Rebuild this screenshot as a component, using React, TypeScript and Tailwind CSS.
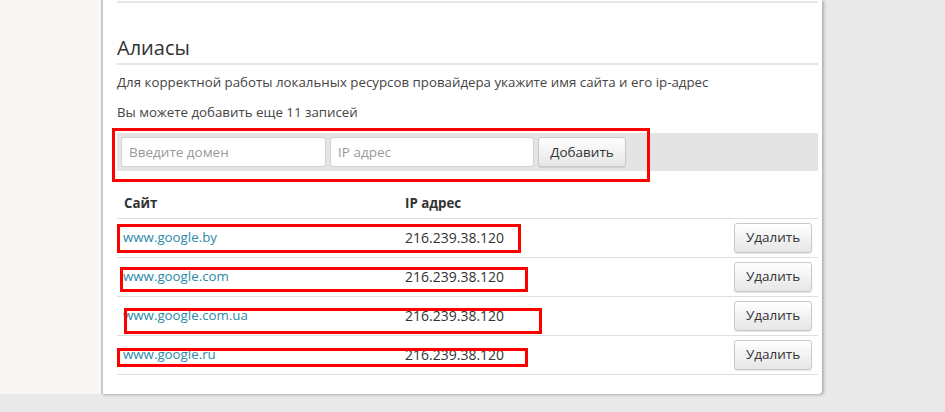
import React from "react";

const rows = [
  { site: "www.google.by", ip: "216.239.38.120", mark: "left-[0px] top-[5px] w-[404px] h-[29px]" },
  { site: "www.google.com", ip: "216.239.38.120", mark: "left-[3px] top-[9px] w-[408px] h-[25px]" },
  { site: "www.google.com.ua", ip: "216.239.38.120", mark: "left-[7px] top-[11px] w-[418px] h-[26px]" },
  { site: "www.google.ru", ip: "216.239.38.120", mark: "left-[0px] top-[12px] w-[411px] h-[19px]" },
];

export default function App() {
  return (
    <div
      className="w-[945px] h-[412px] overflow-hidden bg-[#e9e9e9] text-[13.3px] text-[#333]"
      style={{ fontFamily: '"Open Sans", "Noto Sans", sans-serif' }}
    >
      <div className="flex h-[394px]">
        <div className="w-[101px] bg-[#fbf6f6]" />
        <div className="w-[721px] bg-white border-l-2 border-[#cbcbcb] rounded-br-[4px] shadow-[2px_1px_3px_rgba(0,0,0,0.25)] pl-[14px] pr-[4px]">
          <div className="mt-[1px] border-t-2 border-[#e6e6e6]" />
          <h2 className="mt-[33px] text-[20px] leading-[24px] font-normal text-[#333] pb-[3px] border-b-2 border-[#e6e6e6]">
            Алиасы
          </h2>
          <p className="mt-[8px] leading-[18px] text-[#444]">
            Для корректной работы локальных ресурсов провайдера укажите имя сайта и его ip-адрес
          </p>
          <p className="mt-[12px] leading-[18px] text-[#444]">Вы можете добавить еще 11 записей</p>
          <div className="relative mt-[12px]">
            <div className="flex items-center gap-[4px] bg-[#e4e4e4] h-[38px] px-[4px]">
              <input
                placeholder="Введите домен"
                className="w-[205px] h-[30px] rounded-[3px] border border-[#d4d4d4] bg-white px-[7px] text-[13.5px] placeholder:text-[#999] outline-none"
              />
              <input
                placeholder="IP адрес"
                className="w-[204px] h-[30px] rounded-[3px] border border-[#d4d4d4] bg-white px-[7px] text-[13.5px] placeholder:text-[#999] outline-none"
              />
              <button className="w-[88px] h-[30px] rounded-[3px] border border-[#c8c8c8] bg-gradient-to-b from-white to-[#e6e6e6] text-[13.5px] text-[#333] shadow-[0_1px_1px_rgba(0,0,0,0.1)]">
                Добавить
              </button>
            </div>
            <div className="absolute left-[-5px] top-[-5px] w-[538px] h-[54px] border-[3px] border-[#ff0000]" />
          </div>
          <table className="mt-[19px] w-full border-collapse">
            <thead>
              <tr className="border-b border-[#dedede]">
                <th className="text-left font-bold pl-[7px] h-[28px] w-[288px]">Сайт</th>
                <th className="text-left font-bold">IP адрес</th>
                <th />
              </tr>
            </thead>
            <tbody>
              {rows.map((r) => (
                <tr key={r.site} className="border-b border-[#dedede] h-[39px]">
                  <td className="pl-[6px] relative">
                    <span className="text-[#2b8aa8]">{r.site}</span>
                    <div className={"absolute border-[3px] border-[#ff0000] " + r.mark} />
                  </td>
                  <td className="text-[14px]">{r.ip}</td>
                  <td className="text-right pr-[6px]">
                    <button className="w-[78px] h-[30px] rounded-[3px] border border-[#c8c8c8] bg-gradient-to-b from-white to-[#e6e6e6] text-[13.5px] text-[#333] shadow-[0_1px_1px_rgba(0,0,0,0.1)]">
                      Удалить
                    </button>
                  </td>
                </tr>
              ))}
            </tbody>
          </table>
        </div>
      </div>
    </div>
  );
}
